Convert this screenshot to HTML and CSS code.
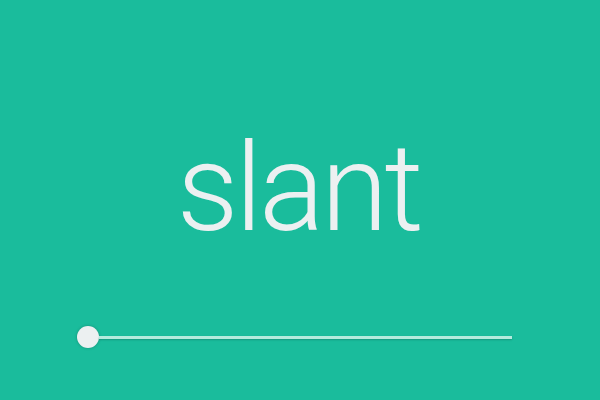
FILE: index.html
```html
<!DOCTYPE html>
<html>
<head>
<meta charset="utf-8">
<link rel="stylesheet" href="styles.css">
</head>
<body>
<div class="stage">
  <div class="word">slant</div>
  <div class="slider">
    <div class="thumb"></div>
    <div class="track"></div>
  </div>
</div>
</body>
</html>
```
FILE: styles.css
```css
html, body {
  margin: 0;
  padding: 0;
  width: 600px;
  height: 400px;
  overflow: hidden;
  background: #1abc9c;
}
.stage {
  width: 600px;
  height: 400px;
  display: flex;
  flex-direction: column;
  align-items: center;
}
.word {
  margin-top: 119px;
  margin-right: 3px;
  font-family: Roboto, "Liberation Sans", sans-serif;
  font-weight: 300;
  font-size: 122px;
  letter-spacing: -3.5px;
  line-height: 140px;
  color: #ecf0f1;
  height: 140px;
}
.slider {
  margin-top: 67px;
  width: 435px;
  margin-left: -12px;
  display: flex;
  align-items: center;
}
.thumb {
  width: 22px;
  height: 22px;
  border-radius: 50%;
  background: #ecf0f1;
  box-shadow: 0 0 3px rgba(0, 0, 0, 0.25);
  flex: none;
}
.track {
  flex: 1;
  height: 3px;
  background: #b3ebdd;
  box-shadow: 0 1px 2px rgba(0, 0, 0, 0.2);
}
```
